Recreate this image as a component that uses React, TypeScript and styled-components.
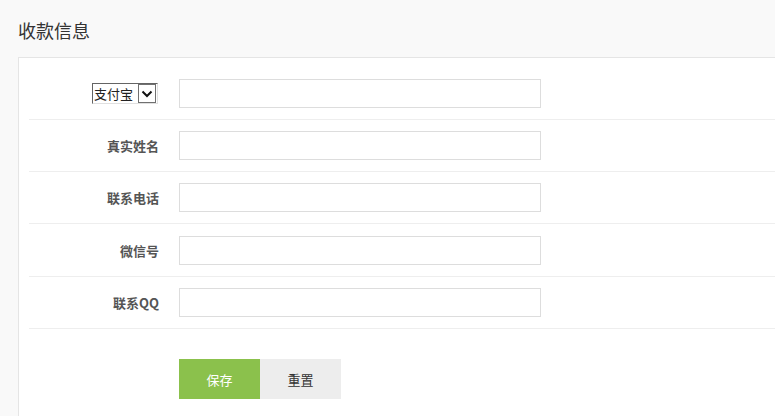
import styled, { createGlobalStyle } from 'styled-components'

const GlobalStyle = createGlobalStyle`
  html, body {
    margin: 0;
    padding: 0;
    background: #f9f9f9;
    overflow: hidden;
  }
  body {
    font-family: "Liberation Sans", "Noto Sans CJK SC", sans-serif;
    font-size: 13px;
    color: #333;
  }
`

const fields = ['真实姓名', '联系电话', '微信号', '联系QQ']

const App = () => {
  return (
    <Page>
      <GlobalStyle />
      <Title>收款信息</Title>
      <Panel>
        <Row>
          <Label>
            <SelectBox>
              <Select defaultValue='alipay'>
                <option value='alipay'>支付宝</option>
                <option value='bank'>银行卡</option>
              </Select>
              <Arrow>
                <svg width='12' height='8' viewBox='0 0 12 8'>
                  <path d='M1.5 1.5 L6 6 L10.5 1.5' fill='none' stroke='#111' strokeWidth='2' />
                </svg>
              </Arrow>
            </SelectBox>
          </Label>
          <Input />
        </Row>
        {fields.map((f, i) => (
          <Row key={f} $extra={i === 2}>
            <Label>{f}</Label>
            <Input />
          </Row>
        ))}
        <Actions>
          <Button $primary>保存</Button>
          <Button>重置</Button>
        </Actions>
      </Panel>
    </Page>
  )
}
export default App

const Page = styled.div`
  display: flex;
  flex-direction: column;
  padding-left: 18px;
  min-height: 416px;
  box-sizing: border-box;
`

const Title = styled.h2`
  margin: 0;
  height: 57px;
  line-height: 60px;
  font-size: 18px;
  font-weight: normal;
  color: #333;
  font-family: "Noto Sans CJK SC", sans-serif;
`

const Panel = styled.div`
  flex: 1;
  background: #fff;
  border-top: 1px solid #e5e5e5;
  border-left: 1px solid #e5e5e5;
  padding: 10px 0 0 10px;
`

const Row = styled.div<{ $extra?: boolean }>`
  display: flex;
  align-items: center;
  padding: ${(p) => (p.$extra ? '12px 0 11px' : '11px 0')};
  border-bottom: 1px solid #eee;
`

const Label = styled.label`
  width: 130px;
  padding-right: 20px;
  display: flex;
  justify-content: flex-end;
  font-weight: bold;
  color: #555;
  font-family: "Noto Sans CJK SC", sans-serif;
  font-size: 13px;
`

const SelectBox = styled.span`
  display: inline-flex;
  align-items: stretch;
  height: 21px;
  box-sizing: border-box;
  border: 1px solid;
  border-color: #646464 #e0e0e0 #e0e0e0 #646464;
  background: #fff;
  margin-right: 1px;
`

const Select = styled.select`
  appearance: none;
  border: none;
  outline: none;
  background: transparent;
  padding: 0 0 0 1px;
  margin: 0;
  width: 45px;
  font-size: 13px;
  font-weight: normal;
  color: #222;
  font-family: "Noto Sans CJK SC", sans-serif;
`

const Arrow = styled.span`
  width: 18px;
  box-sizing: border-box;
  border: 1px solid #707070;
  display: flex;
  align-items: center;
  justify-content: center;
  background: #fff;
  margin: 0 1px 0 0;
`

const Input = styled.input`
  width: 362px;
  height: 29px;
  box-sizing: border-box;
  border: 1px solid #ddd;
  outline: none;
  padding: 0 8px;
  font-size: 13px;
`

const Actions = styled.div`
  display: flex;
  padding: 30px 0 0 150px;
`

const Button = styled.button<{ $primary?: boolean }>`
  width: 81px;
  height: 40px;
  border: none;
  cursor: pointer;
  font-size: 13px;
  font-family: "Noto Sans CJK SC", sans-serif;
  background: ${(p) => (p.$primary ? '#8bc14c' : '#ededed')};
  color: ${(p) => (p.$primary ? '#fff' : '#333')};
`
